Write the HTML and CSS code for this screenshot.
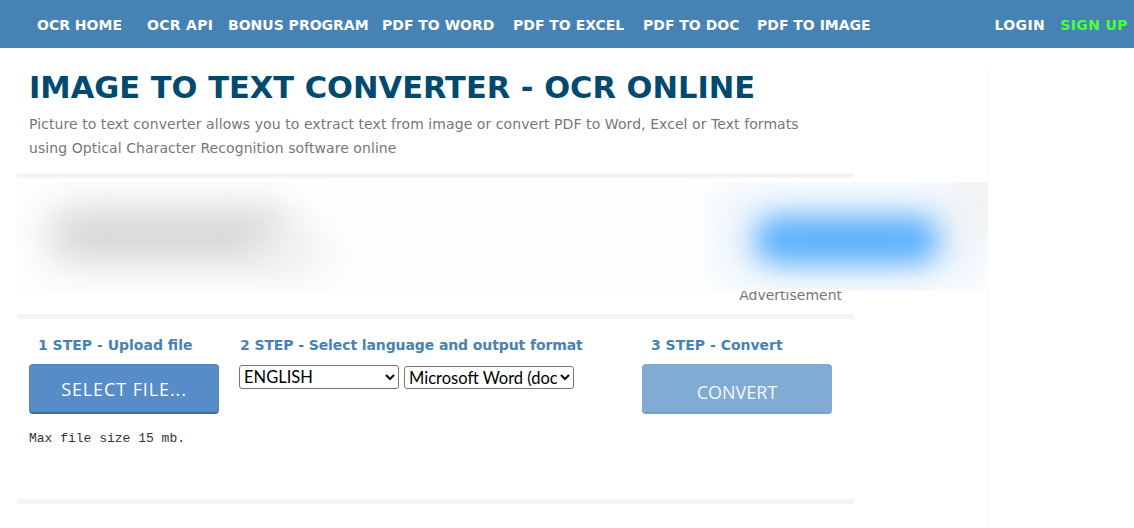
FILE: index.html
```html
<!DOCTYPE html>
<html lang="en">
<head>
<meta charset="utf-8">
<title>Image to Text Converter - OCR Online</title>
<link rel="stylesheet" href="styles.css">
</head>
<body>
<nav class="nav">
  <div class="nav-main">
    <a class="nav-link home">OCR HOME</a>
    <a class="nav-link api">OCR API</a>
    <a class="nav-link bonus">BONUS PROGRAM</a>
    <a class="nav-link word">PDF TO WORD</a>
    <a class="nav-link excel">PDF TO EXCEL</a>
    <a class="nav-link doc">PDF TO DOC</a>
    <a class="nav-link image">PDF TO IMAGE</a>
  </div>
  <div class="nav-auth">
    <a class="nav-link">LOGIN</a>
    <a class="nav-link signup">SIGN UP</a>
  </div>
</nav>
<main class="main">
  <header class="intro">
    <h1 class="title">IMAGE TO TEXT CONVERTER - OCR ONLINE</h1>
    <p class="lead">Picture to text converter allows you to extract text from image or convert PDF to Word, Excel or Text formats<br>using Optical Character Recognition software online</p>
  </header>
  <hr class="rule">
  <div class="ad-block">
    <div class="ad">
      <span class="blob blob-text"></span>
      <span class="blob blob-text-tail"></span>
      <span class="blob blob-halo"></span>
      <span class="blob blob-tint"></span>
      <span class="blob blob-button"></span>
    </div>
    <div class="ad-label">Advertisement</div>
  </div>
  <hr class="rule">
  <section class="steps">
    <div class="step step-one">
      <h2 class="step-title">1 STEP - Upload file</h2>
      <button class="btn btn-select" type="button">SELECT FILE...</button>
      <p class="note">Max file size 15 mb.</p>
    </div>
    <div class="step step-two">
      <h2 class="step-title">2 STEP - Select language and output format</h2>
      <div class="selects">
        <select class="select select-lang"><option>ENGLISH</option></select>
        <select class="select select-format"><option>Microsoft Word (docx)</option></select>
      </div>
    </div>
    <div class="step step-three">
      <h2 class="step-title">3 STEP - Convert</h2>
      <button class="btn btn-convert" type="button">CONVERT</button>
    </div>
  </section>
  <hr class="rule">
</main>
</body>
</html>
```
FILE: styles.css
```css
* { box-sizing: border-box; }
html, body { margin: 0; padding: 0; height: 100%; overflow: hidden; }
html { background: #fff; }
body { font-family: "DejaVu Sans", Verdana, sans-serif; }

.nav {
  height: 48px;
  background: #4682b4;
  display: flex;
  align-items: center;
  justify-content: space-between;
  padding: 1px 6px 0 37px;
}
.nav-main, .nav-auth { display: flex; align-items: center; }
.nav-auth { gap: 15px; }
.nav-auth .nav-link { letter-spacing: 0.4px; }
.nav-link {
  color: #fff;
  font-size: 14px;
  font-weight: 700;
  white-space: nowrap;
}
.home { width: 110px; }
.api { width: 81px; letter-spacing: 0.3px; }
.bonus { width: 154px; }
.word { width: 131px; }
.excel { width: 130px; }
.doc { width: 114px; }
.nav-auth .signup { color: #4cff3a; }

.main {
  width: 988px;
  height: 480px;
  padding: 0 0 0 17px;
  position: relative;
  background: linear-gradient(#f7f7f7, #f7f7f7) right 20px / 1px 100% no-repeat;
}
.intro { padding: 24px 0 0 12px; height: 125px; }
.title {
  margin: 0;
  color: #004a70;
  font-size: 30.5px;
  line-height: 32px;
  font-weight: 700;
  white-space: nowrap;
}
.lead {
  margin: 8px 0 0;
  color: #777;
  font-size: 14px;
  line-height: 24px;
  letter-spacing: 0.07px;
  white-space: nowrap;
}
.rule {
  width: 837px;
  height: 5px;
  margin: 0;
  border: 0;
  background: #f4f4f4;
}
.ad-block { height: 136px; padding-top: 4px; }
.ad {
  width: 971px;
  height: 109px;
  position: relative;
  z-index: 1;
  overflow: hidden;
  background: #fefefe;
}
.blob { position: absolute; display: block; }
.blob-text {
  left: 32px; top: 28px; width: 240px; height: 50px;
  background: #d2d2d2;
  border-radius: 22px;
  filter: blur(20px);
}
.blob-text-tail {
  left: 235px; top: 55px; width: 80px; height: 35px;
  background: #f0f0f0;
  border-radius: 17px;
  filter: blur(18px);
}
.blob-halo {
  left: 705px; top: 8px; width: 255px; height: 92px;
  background: #e9f3fc;
  filter: blur(18px);
}
.blob-tint {
  right: -24px; top: -10px; width: 56px; height: 66px;
  background: #f0f2f3;
  filter: blur(12px);
}
.blob-button {
  left: 738px; top: 34px; width: 184px; height: 48px;
  background: #5cb0fc;
  border-radius: 24px;
  filter: blur(14px);
}
.ad-label {
  width: 825px;
  margin-top: -6px;
  height: 20px;
  text-align: right;
  color: #777;
  font-size: 14px;
  line-height: 20px;
}
.steps {
  width: 837px;
  height: 180px;
  display: grid;
  grid-template-columns: 210px 403px 224px;
  padding-top: 17px;
}
.step-title {
  margin: 0;
  color: #4682b4;
  font-size: 14px;
  line-height: 18px;
  font-weight: 700;
  white-space: nowrap;
}
.step-one { padding-left: 12px; }
.step-one .step-title { padding-left: 9px; }
.step-two { padding-left: 12px; }
.step-two .step-title { padding-left: 1px; letter-spacing: -0.1px; }
.step-three { padding-left: 12px; }
.step-three .step-title { padding-left: 9px; }
.btn {
  display: block;
  width: 190px;
  height: 50px;
  margin-top: 10px;
  border: 1px solid #3e6ea1;
  border-bottom-width: 2px;
  border-radius: 4px;
  color: #fff;
  font-family: "Open Sans", sans-serif;
  font-size: 18px;
}
.btn-select { background: #568dc6; padding: 1px 0 0; letter-spacing: 0.9px; border-color: #4d82ba #4d82ba #3e6ea1; }
.btn-convert {
  background: #82abd4;
  border-color: #82abd4 #82abd4 #7aa0c6;
  padding: 7px 0 0;
  color: #f2f6fa;
}
.note {
  margin: 17px 0 0;
  color: #333;
  font-family: "Liberation Mono", monospace;
  font-size: 13px;
  line-height: 16px;
}
.selects { display: flex; align-items: flex-start; gap: 5px; margin-top: 11px; }
.select {
  height: 24px;
  padding-bottom: 2px;
  background: #fff;
  border: 1px solid #767676;
  border-radius: 3px;
  color: #000;
  font-family: "Lato", sans-serif;
  font-size: 16.5px;
}
.select-lang { width: 160px; }
.select-format { width: 170px; margin-top: 1px; height: 23px; }
```
